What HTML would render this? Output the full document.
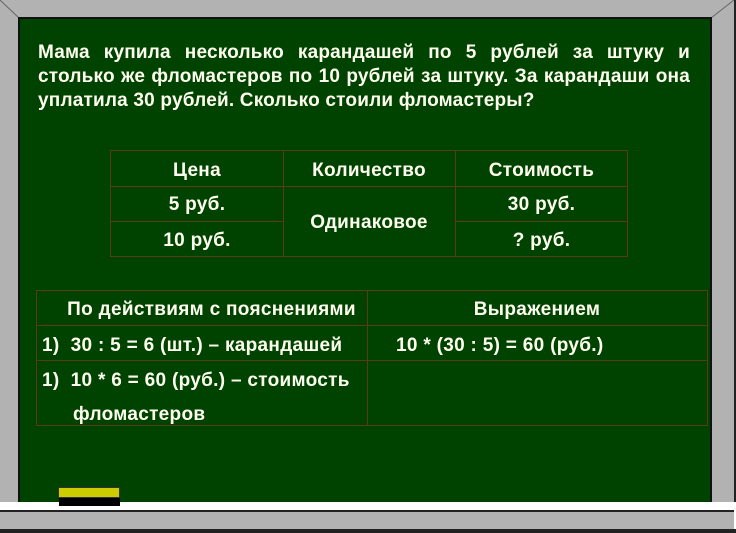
<!DOCTYPE html>
<html><head><meta charset="utf-8"><style>
body{margin:0;width:736px;height:533px;background:#fff;position:relative;overflow:hidden;font-family:"Liberation Sans",Arial,sans-serif;font-weight:bold;color:#fffff0}
.abs{position:absolute}
.gray{background:#b2b2b2}
.t{position:absolute;font-size:19px;text-align:center;white-space:nowrap;letter-spacing:0.3px}
.ln{position:absolute;background:#5a3a1a}
.p{position:absolute;left:38px;width:652px;font-size:19px;text-align:justify;text-align-last:justify;white-space:nowrap;letter-spacing:0.2px}
</style></head><body>
<div class="abs gray" style="left:0;top:0;width:734px;height:502px;border-right:2px solid #222"></div>
<svg class="abs" style="left:0;top:0" width="736" height="533">
<line x1="0" y1="0" x2="19" y2="18" stroke="#666" stroke-width="1"/>
<line x1="734" y1="0" x2="711" y2="18" stroke="#666" stroke-width="1"/>
</svg>
<div class="abs" style="left:18px;top:17px;width:690px;height:483px;background:#004300;border:2px solid #111"></div>
<div class="abs" style="left:0;top:502px;width:734px;height:8px;background:#fff"></div>
<div class="abs" style="left:0;top:510px;width:734px;height:2px;background:#222"></div>
<div class="abs gray" style="left:0;top:512px;width:734px;height:17px"></div>
<div class="abs" style="left:0;top:529px;width:736px;height:4px;background:#222"></div>
<div class="abs" style="left:58px;top:487px;width:62px;height:11px;background:#cccc00;border:1px solid #333;box-sizing:border-box"></div>
<div class="abs" style="left:59px;top:498px;width:61px;height:8px;background:#000"></div>
<div class="p" style="top:42px">Мама купила несколько карандашей по 5 рублей за штуку и</div>
<div class="p" style="top:66px">столько же фломастеров по 10 рублей за штуку. За карандаши она</div>
<div class="p" style="top:90px;text-align-last:left">уплатила 30 рублей. Сколько стоили фломастеры?</div>

<div class="ln" style="left:110px;top:150px;width:518px;height:1px"></div>
<div class="ln" style="left:110px;top:186px;width:518px;height:1px"></div>
<div class="ln" style="left:110px;top:221px;width:174px;height:1px"></div>
<div class="ln" style="left:455px;top:221px;width:173px;height:1px"></div>
<div class="ln" style="left:110px;top:256px;width:518px;height:1px"></div>
<div class="ln" style="left:110px;top:150px;width:1px;height:107px"></div>
<div class="ln" style="left:283px;top:150px;width:1px;height:107px"></div>
<div class="ln" style="left:455px;top:150px;width:1px;height:107px"></div>
<div class="ln" style="left:627px;top:150px;width:1px;height:107px"></div>
<div class="t" style="left:110px;width:174px;top:160px">Цена</div>
<div class="t" style="left:283px;width:172px;top:160px">Количество</div>
<div class="t" style="left:455px;width:173px;top:160px">Стоимость</div>
<div class="t" style="left:110px;width:174px;top:194px">5 руб.</div>
<div class="t" style="left:110px;width:174px;top:230px">10 руб.</div>
<div class="t" style="left:283px;width:172px;top:212px">Одинаковое</div>
<div class="t" style="left:455px;width:173px;top:194px">30 руб.</div>
<div class="t" style="left:455px;width:173px;top:230px">? руб.</div>

<div class="ln" style="left:36px;top:290px;width:672px;height:1px"></div>
<div class="ln" style="left:36px;top:325px;width:672px;height:1px"></div>
<div class="ln" style="left:36px;top:360px;width:672px;height:1px"></div>
<div class="ln" style="left:36px;top:425px;width:672px;height:1px"></div>
<div class="ln" style="left:36px;top:290px;width:1px;height:136px"></div>
<div class="ln" style="left:367px;top:290px;width:1px;height:136px"></div>
<div class="ln" style="left:707px;top:290px;width:1px;height:136px"></div>
<div class="t" style="left:46px;width:331px;top:299px">По действиям с пояснениями</div>
<div class="t" style="left:367px;width:340px;top:299px">Выражением</div>
<div class="t" style="left:42px;top:335px;text-align:left">1)&nbsp; 30 : 5 = 6 (шт.) – карандашей</div>
<div class="t" style="left:42px;top:370px;text-align:left">1)&nbsp; 10 * 6 = 60 (руб.) – стоимость</div>
<div class="t" style="left:73px;top:404px;text-align:left">фломастеров</div>
<div class="t" style="left:396px;top:335px;text-align:left">10 * (30 : 5) = 60 (руб.)</div>
</body></html>
